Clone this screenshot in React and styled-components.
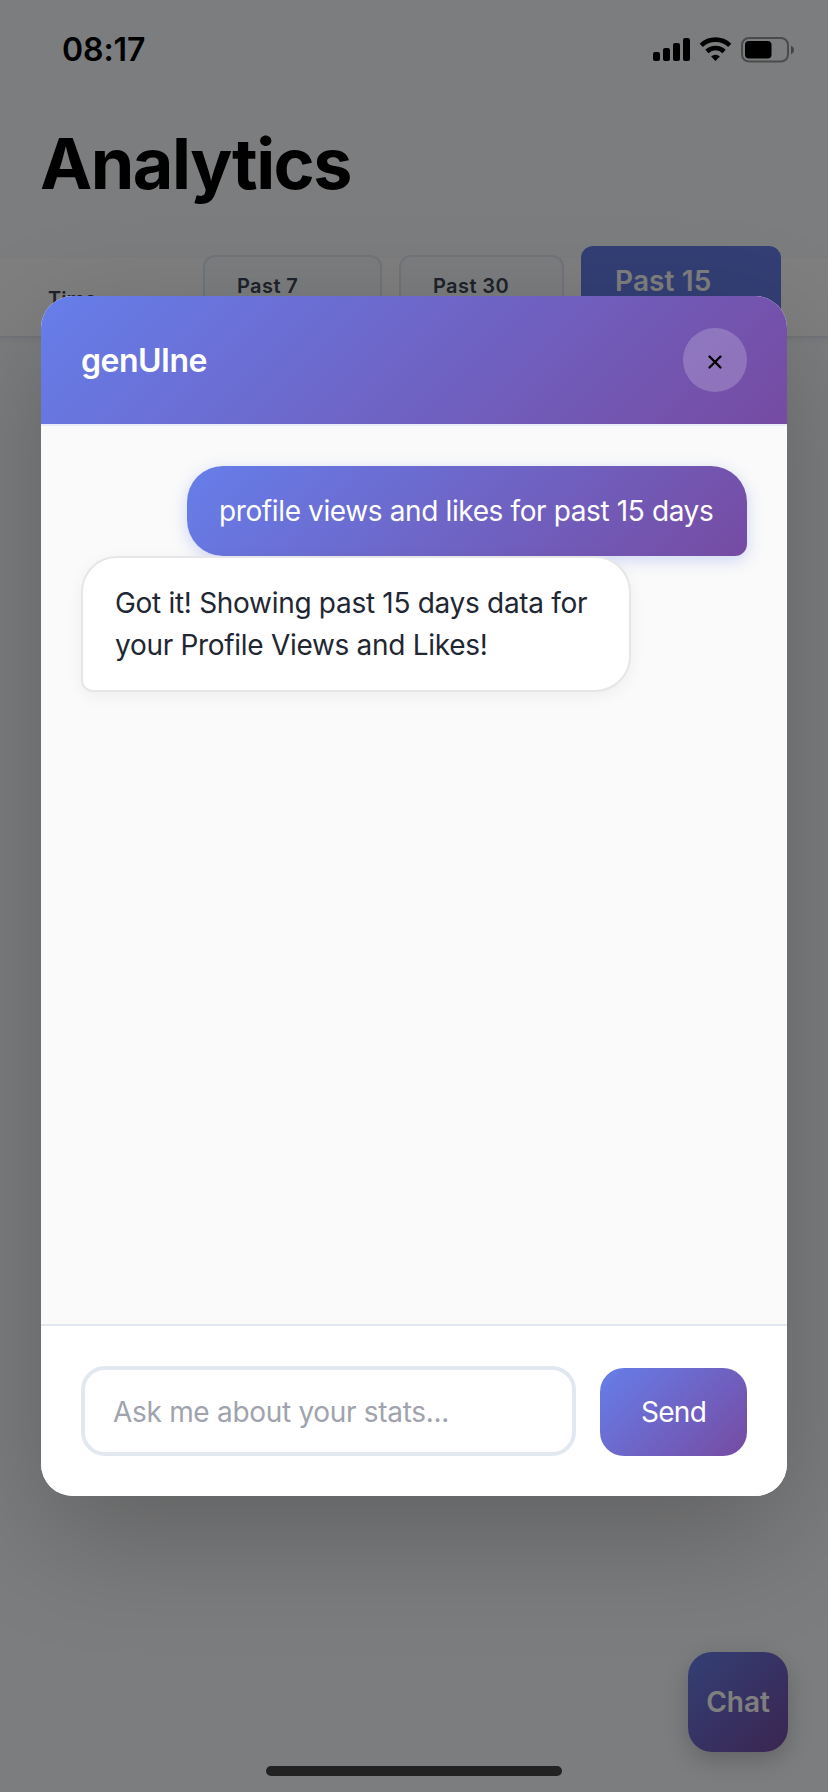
import styled, { createGlobalStyle } from "styled-components"
import { X } from "lucide-react"

const GlobalStyle = createGlobalStyle`
*{
    box-sizing: border-box;
}
body{
    margin: 0;
    background-color: #f8fafc;
    font-family: Inter, "Liberation Sans", sans-serif;
}
button, input{
    font-family: inherit;
    border: none;
}
`;

const Screen = styled.div`
position: relative;
width: 828px;
height: 1792px;
overflow: hidden;
background-color: #f8fafc;
`;

const StatusBar = styled.header`
display: flex;
justify-content: space-between;
align-items: center;
height: 98px;
padding: 2px 33px 0 62px;
`;

const Clock = styled.span`
font-size: 32px;
font-weight: 600;
letter-spacing: -0.1px;
line-height: 40px;
`;

const StatusIcons = styled.svg`
width: 142px;
height: 26px;
`;

const Title = styled.h1`
margin: 0;
padding: 22px 0 0 40px;
height: 160px;
font-size: 70px;
line-height: 88px;
font-weight: 700;
letter-spacing: -1.5px;
`;

const FilterBar = styled.div`
display: flex;
align-items: center;
height: 80px;
padding: 0 0 0 48px;
background-color: #ffffff;
border-bottom: 2px solid #e2e8f0;
box-shadow: 0 2px 6px rgba(0, 0, 0, 0.05);
`;

const FilterLabel = styled.span`
flex: none;
width: 155px;
padding-top: 3px;
font-size: 20px;
font-weight: 600;
letter-spacing: 0px;
color: #3c4656;
`;

const FilterButton = styled.button`
flex: none;
width: ${props => props.$width}px;
height: ${props => props.$active ? 102 : 84}px;
margin-right: 17px;
padding: ${props => props.$active ? '18px 34px' : '17px 32px'};
display: flex;
align-items: flex-start;
border: ${props => props.$active ? 'none' : '2px solid #e2e8f0'};
border-radius: 12px;
background-color: ${props => props.$active ? '#667eea' : '#f8fafc'};
color: ${props => props.$active ? '#ffffff' : '#3c4656'};
font-size: ${props => props.$active ? 28 : 20}px;
line-height: ${props => props.$active ? 34 : 24}px;
font-weight: 600;
letter-spacing: ${props => props.$active ? 0.1 : 0.4}px;
`;

const ChatButton = styled.button`
position: absolute;
right: 40px;
bottom: 40px;
width: 100px;
height: 100px;
padding: 0;
border-radius: 24px;
background: linear-gradient(135deg, #667eea 0%, #764ba2 100%);
box-shadow: 0 8px 24px rgba(0, 0, 0, 0.2);
color: #ffffff;
font-size: 28px;
font-weight: 600;
`;

const Overlay = styled.div`
position: absolute;
inset: 0;
display: flex;
align-items: center;
justify-content: center;
background-color: rgba(0, 0, 0, 0.5);
`;

const Modal = styled.section`
display: flex;
flex-direction: column;
width: 746px;
height: 1200px;
border-radius: 32px;
overflow: hidden;
background-color: #ffffff;
box-shadow: 0 40px 120px rgba(0, 0, 0, 0.22);
`;

const ModalHeader = styled.div`
display: flex;
align-items: center;
justify-content: space-between;
height: 130px;
padding: 0 40px;
border-bottom: 2px solid #e9ebf8;
background: linear-gradient(135deg, #667eea 0%, #764ba2 100%) padding-box;
`;

const ModalTitle = styled.h2`
margin: 0;
color: #ffffff;
font-size: 32px;
font-weight: 600;
letter-spacing: -0.5px;
`;

const CloseButton = styled.button`
display: flex;
align-items: center;
justify-content: center;
width: 64px;
height: 64px;
padding: 4px 0 0;
border-radius: 50%;
background-color: rgba(255, 255, 255, 0.2);
color: #000000;
`;

const Messages = styled.div`
flex: 1;
display: flex;
flex-direction: column;
padding: 40px;
background-color: #fafafa;
`;

const Message = styled.div`
padding: 24px 32px;
font-size: 28px;
line-height: 42px;
letter-spacing: -0.38px;
white-space: pre-line;
`;

const UserMessage = styled(Message)`
align-self: flex-end;
width: 560px;
border-radius: 36px 36px 12px 36px;
background: linear-gradient(135deg, #667eea 0%, #764ba2 100%);
box-shadow: 0 4px 16px rgba(102, 126, 234, 0.3);
color: #ffffff;
white-space: nowrap;
`;

const BotMessage = styled(Message)`
position: relative;
align-self: flex-start;
width: 550px;
border: 2px solid #e6e6e8;
border-radius: 36px 36px 36px 12px;
background-color: #ffffff;
box-shadow: 0 4px 16px rgba(0, 0, 0, 0.05);
color: #1f2733;
letter-spacing: -0.3px;
`;

const Composer = styled.form`
display: flex;
align-items: flex-end;
gap: 24px;
height: 172px;
padding: 40px;
border-top: 2px solid #e2e8f0;
background-color: #ffffff;
`;

const TextField = styled.input`
flex: 1;
min-width: 0;
height: 90px;
padding: 1px 28px 0;
border: 4px solid #e2e8f0;
border-radius: 24px;
background-color: #ffffff;
font-size: 28px;
letter-spacing: -0.3px;
outline: none;
&::placeholder{
    color: #a0a3ad;
    opacity: 1;
}
`;

const SendButton = styled.button`
width: 147px;
height: 88px;
padding: 0;
border-radius: 24px;
background: linear-gradient(135deg, #667eea 0%, #764ba2 100%);
color: #ffffff;
font-size: 28px;
letter-spacing: -0.7px;
`;

const HomeIndicator = styled.div`
position: absolute;
left: 266px;
bottom: 16px;
width: 296px;
height: 10px;
border-radius: 5px;
background-color: #222222;
`;

const filters = [
    { label: 'Past 7', width: 179 },
    { label: 'Past 30', width: 165 },
    { label: 'Past 15', width: 200, active: true },
];

function PhoneStatus(){
    return(
        <StatusIcons viewBox="0 0 142 26">
            <rect x="0" y="15" width="7" height="9" rx="2" />
            <rect x="10" y="11" width="7" height="13" rx="2" />
            <rect x="20" y="6" width="7" height="18" rx="2" />
            <rect x="30" y="1" width="7" height="23" rx="2" />
            <g fill="none" stroke="#000" strokeWidth="4.6">
                <path d="M48.3 8.4a20.4 20.4 0 0 1 28.4 0" />
                <path d="M53.9 14.5a12.4 12.4 0 0 1 17.2 0" />
            </g>
            <path d="M62.5 24l-4.4-4.5a6.3 6.3 0 0 1 8.8 0z" />
            <rect x="89" y="1" width="46" height="23.5" rx="7" fill="none" stroke="#000" strokeOpacity="0.4" strokeWidth="2" />
            <rect x="92" y="4" width="26.5" height="17.5" rx="4" />
            <path d="M138 8.8c4 1.6 4 6.8 0 8.4z" fillOpacity="0.45" />
        </StatusIcons>
    )
}

export default function App(){
    return(
        <>
            <GlobalStyle />
            <Screen>
                <StatusBar>
                    <Clock>08:17</Clock>
                    <PhoneStatus />
                </StatusBar>
                <Title>Analytics</Title>
                <FilterBar>
                    <FilterLabel>Time</FilterLabel>
                    {filters.map(filter => (
                        <FilterButton key={filter.label} $width={filter.width} $active={filter.active}>
                            {filter.label}
                        </FilterButton>
                    ))}
                </FilterBar>
                <ChatButton>Chat</ChatButton>
                <Overlay>
                    <Modal>
                        <ModalHeader>
                            <ModalTitle>genUIne</ModalTitle>
                            <CloseButton aria-label="Close">
                                <X size={22} strokeWidth={2.6} />
                            </CloseButton>
                        </ModalHeader>
                        <Messages>
                            <UserMessage>profile views and likes for past 15 days</UserMessage>
                            <BotMessage>{'Got it! Showing past 15 days data for\nyour Profile Views and Likes!'}</BotMessage>
                        </Messages>
                        <Composer>
                            <TextField placeholder="Ask me about your stats..." />
                            <SendButton type="button">Send</SendButton>
                        </Composer>
                    </Modal>
                </Overlay>
                <HomeIndicator />
            </Screen>
        </>
    )
}
